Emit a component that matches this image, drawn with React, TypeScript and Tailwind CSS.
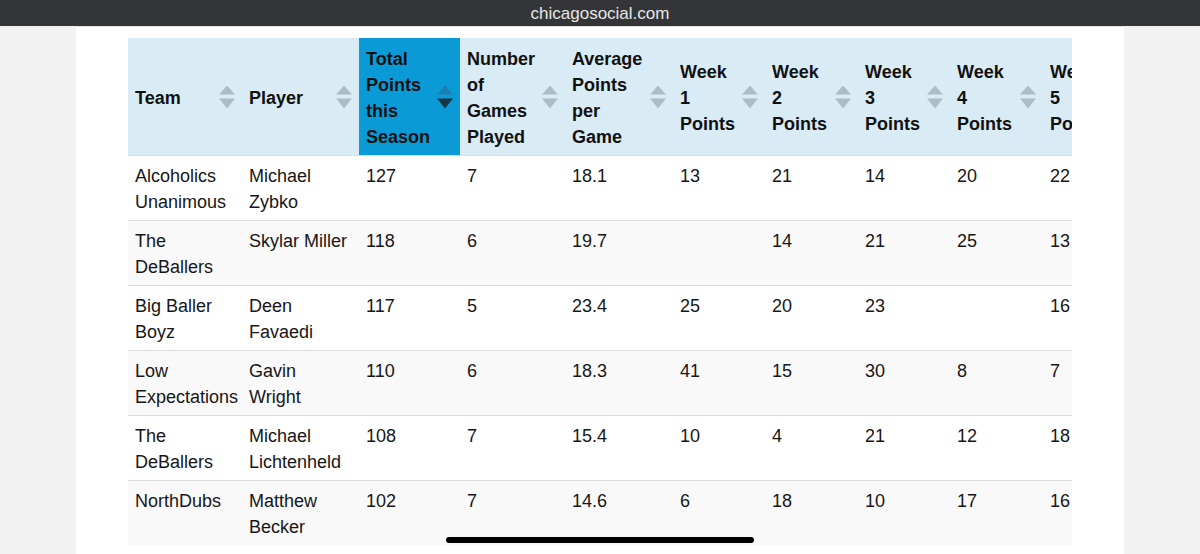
import React from 'react';

type Row = {
  team: string;
  player: string;
  total: string;
  games: string;
  avg: string;
  weeks: string[];
};

const rows: Row[] = [
  { team: 'Alcoholics Unanimous', player: 'Michael Zybko', total: '127', games: '7', avg: '18.1', weeks: ['13', '21', '14', '20', '22'] },
  { team: 'The DeBallers', player: 'Skylar Miller', total: '118', games: '6', avg: '19.7', weeks: ['', '14', '21', '25', '13'] },
  { team: 'Big Baller Boyz', player: 'Deen Favaedi', total: '117', games: '5', avg: '23.4', weeks: ['25', '20', '23', '', '16'] },
  { team: 'Low Expectations', player: 'Gavin Wright', total: '110', games: '6', avg: '18.3', weeks: ['41', '15', '30', '8', '7'] },
  { team: 'The DeBallers', player: 'Michael Lichtenheld', total: '108', games: '7', avg: '15.4', weeks: ['10', '4', '21', '12', '18'] },
  { team: 'NorthDubs', player: 'Matthew Becker', total: '102', games: '7', avg: '14.6', weeks: ['6', '18', '10', '17', '16'] },
];

const headers: { lines: string[]; active?: boolean }[] = [
  { lines: ['Team'] },
  { lines: ['Player'] },
  { lines: ['Total', 'Points', 'this', 'Season'], active: true },
  { lines: ['Number', 'of', 'Games', 'Played'] },
  { lines: ['Average', 'Points', 'per', 'Game'] },
  { lines: ['Week', '1', 'Points'] },
  { lines: ['Week', '2', 'Points'] },
  { lines: ['Week', '3', 'Points'] },
  { lines: ['Week', '4', 'Points'] },
  { lines: ['Week', '5', 'Points'] },
];

const widths = [114, 117, 101, 105, 108, 92, 93, 92, 93, 93];

const SortIcon: React.FC<{ active?: boolean }> = ({ active }) => (
  <svg
    width="16"
    height="23"
    viewBox="0 0 16 23"
    className="absolute right-[7px] top-1/2 -translate-y-1/2"
  >
    <polygon points="8,0 16,9 0,9" fill={active ? '#1c7eae' : '#aebcc6'} />
    <polygon points="0,13 16,13 8,23" fill={active ? '#1d3445' : '#aebcc6'} />
  </svg>
);

const App: React.FC = () => {
  return (
    <div
      className="relative h-[554px] w-[1200px] overflow-hidden bg-[#f2f2f2]"
      style={{ fontFamily: '"Liberation Sans", Arial, sans-serif' }}
    >
      <div className="flex h-[26px] items-center justify-center bg-[#333537] pt-[1px] text-[17px] text-[#e6e6e6]">
        chicagosocial.com
      </div>

      <div className="mx-[76px] h-[528px] border-t border-[#e2e2e2] bg-white px-[52px] pt-[11px]">
        <div className="w-[944px] overflow-hidden">
          <table className="table-fixed border-collapse text-left text-[18px] leading-[26px] text-[#161616]" style={{ width: 1008 }}>
            <colgroup>
              {widths.map((w, i) => (
                <col key={i} style={{ width: w }} />
              ))}
            </colgroup>
            <thead>
              <tr>
                {headers.map((h, i) => (
                  <th
                    key={i}
                    className={`relative whitespace-nowrap pt-[8px] pb-[5px] pl-[7px] pr-[28px] align-middle font-bold text-[#111] ${
                      h.active ? 'bg-[#0a9bd7]' : 'bg-[#d9ebf5]'
                    }`}
                  >
                    {h.lines.map((l, j) => (
                      <div key={j}>{l}</div>
                    ))}
                    <SortIcon active={h.active} />
                  </th>
                ))}
              </tr>
            </thead>
            <tbody>
              {rows.map((r, i) => (
                <tr key={i} className={`border-t border-[#dddddd] ${i % 2 === 1 ? 'bg-[#f9f9f9]' : 'bg-white'}`}>
                  <td className="px-[7px] pt-[7px] pb-[5px] align-top">{r.team}</td>
                  <td className="px-[7px] pt-[7px] pb-[5px] align-top">{r.player}</td>
                  <td className="px-[7px] pt-[7px] pb-[5px] align-top">{r.total}</td>
                  <td className="px-[7px] pt-[7px] pb-[5px] align-top">{r.games}</td>
                  <td className="px-[7px] pt-[7px] pb-[5px] align-top">{r.avg}</td>
                  {r.weeks.map((w, j) => (
                    <td key={j} className="px-[7px] pt-[7px] pb-[5px] align-top">
                      {w}
                    </td>
                  ))}
                </tr>
              ))}
            </tbody>
          </table>
        </div>
      </div>

      <div className="absolute bottom-[11px] left-[446px] h-[6px] w-[308px] rounded-full bg-black" />
    </div>
  );
};

export default App;
